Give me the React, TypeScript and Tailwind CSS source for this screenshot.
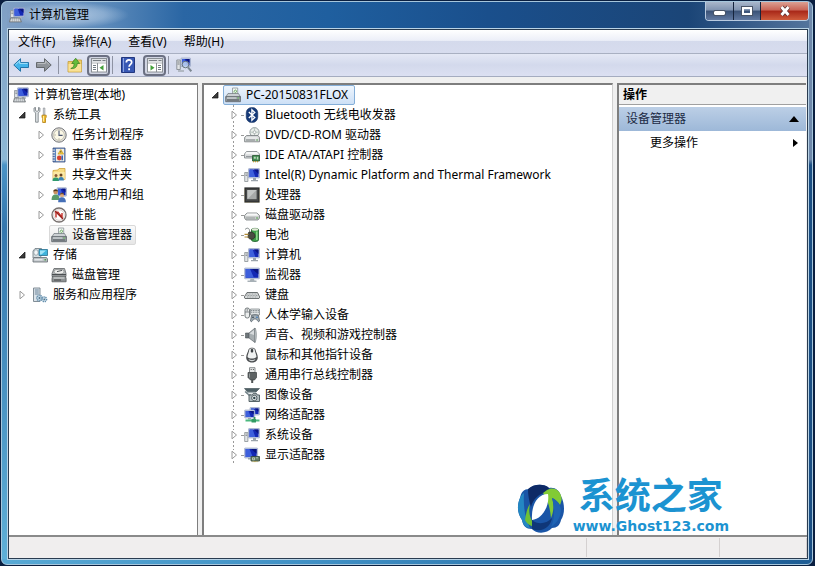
import React from 'react';

type IconProps = { children: React.ReactNode };

function Icon({ children }: IconProps) {
  return (
    <svg className="w-4 h-4 shrink-0" viewBox="0 0 16 16" fill="none" aria-hidden="true">
      {children}
    </svg>
  );
}

/* Blue screen with its grey bezel, reused by most of the hardware icons */
function Screen({ x, y, w, h }: { x: number; y: number; w: number; h: number }) {
  return (
    <>
      <rect x={x} y={y} width={w} height={h} rx="0.6" fill="#c3cfe6" stroke="#8d9bbd" strokeWidth="0.6" />
      <rect x={x + 1} y={y + 1} width={w - 2} height={h - 2} fill="#1428b4" />
      <path d={`M${x + 1} ${y + 1}h${(w - 2) * 0.35}l${(w - 2) * 0.3} ${h - 2}H${x + 1}z`} fill="#3d5fdc" />
      <path d={`M${x + w - 1} ${y + 1}v${(h - 2) * 0.6}L${x + w / 2} ${y + 1}z`} fill="#0a1580" />
    </>
  );
}

const ComputerIcon = () => (
  <Icon>
    <path d="M1.5 3.5h4v7h-4z" fill="#dde1e4" stroke="#8b9298" strokeWidth="0.8" />
    <path d="M2.3 5h2.4M2.3 6.6h2.4" stroke="#6e767c" strokeWidth="0.7" />
    <Screen x={4.5} y={0.7} w={11} h={9} />
    <path d="M9 9.7h3.4l.8 2H8.3z" fill="#aab2bb" />
    <path d="M1.5 11h9.5l1.5 4H.3z" fill="#a5aaae" stroke="#6d7276" strokeWidth="0.7" />
    <path d="M2 12.2h8.6M1.6 13.7h9.8" stroke="#eef0f1" strokeWidth="0.8" strokeDasharray="1.4 0.6" />
  </Icon>
);

const ToolsIcon = () => (
  <Icon>
    <path d="M2 1v3.3L3.6 6v9.2h2.6V6l1.7-1.7V1L6.5 .4v3.2L5 4.4l-1.5-.8V.4z" fill="#dfe3e6" stroke="#71787d" strokeWidth="0.8" />
    <path d="M11.3 1h1.6v7h-1.6z" fill="#d3d7db" stroke="#848a8e" strokeWidth="0.6" />
    <path d="M10 8.2h4.2v2l-.7 1v4.3h-2.8v-4.3l-.7-1z" fill="#f3bd2b" stroke="#b17d12" strokeWidth="0.8" />
    <path d="M11.5 9v5.5" stroke="#fdeaa0" />
  </Icon>
);

const ClockIcon = () => (
  <Icon>
    <circle cx="8" cy="8" r="7.2" fill="#e4e2dc" stroke="#75777a" />
    <circle cx="8" cy="8" r="5.3" fill="#fbf8e6" stroke="#b6b3a4" strokeWidth="0.7" />
    <path d="M8 3.6V8.4h3.6" stroke="#4a5572" strokeWidth="1.1" />
    <path d="M3.6 8h1M8 12.5v-1" stroke="#7d7a6c" strokeWidth="0.8" />
  </Icon>
);

const EventIcon = () => (
  <Icon>
    <path d="M2 1h12v14H2z" fill="#5d83bd" stroke="#3b4f7c" strokeWidth="0.8" />
    <path d="M5 1.8h8.2v12.4H5z" fill="#f1efe6" />
    <path d="M1 3h3M1 5.6h3M1 8.2h3M1 10.8h3M1 13.2h3" stroke="#d8dde6" strokeWidth="1.1" />
    <path d="M9.8 2.5l2.8 4.6H7z" fill="#f8d042" stroke="#be8d14" strokeWidth="0.6" />
    <path d="M9.8 4v1.6" stroke="#333" strokeWidth="0.8" />
    <circle cx="8.3" cy="11" r="2.4" fill="#d5402f" />
    <path d="M11.2 8.5v4.8" stroke="#3f67b4" strokeWidth="1.6" />
  </Icon>
);

const SharedFolderIcon = () => (
  <Icon>
    <path d="M2 3.5l5-.5 1-1.5h6v11H2z" fill="#f7dc82" stroke="#cfa23a" strokeWidth="0.8" />
    <path d="M2.3 5h11.4v7.3H2.3z" fill="#fbe9a6" />
    <circle cx="5" cy="8.6" r="1.5" fill="#8a5a34" />
    <path d="M1.5 14c0-3 1.3-3.6 3.5-3.6S8 11.5 8 14z" fill="#2f9a6c" />
    <circle cx="10" cy="8.1" r="1.5" fill="#68431f" />
    <path d="M7.4 13.5c0-3 .8-3.5 2.7-3.5s2.8 1 2.8 3.5z" fill="#3c83b5" />
  </Icon>
);

const UsersIcon = () => (
  <Icon>
    <Screen x={6} y={0.7} w={9.5} h={8.5} />
    <circle cx="4.6" cy="5" r="2.3" fill="#c99060" />
    <path d="M2.3 4.6c0-3 4.7-3 4.7 0-1.2-.8-3-.8-4.7 0z" fill="#563a1e" />
    <path d="M.6 13c0-4 1.4-5.5 4-5.5S8.5 9 8.5 13z" fill="#5b9a6b" />
    <circle cx="11" cy="8.3" r="2" fill="#dcab7e" />
    <path d="M9 7.8c0-2.6 4-2.6 4 0-1-.6-2.8-.6-4 0z" fill="#77502b" />
    <path d="M7.2 15.2c0-3.8 1.3-5 3.8-5s3.9 1.4 3.9 5z" fill="#466fb7" />
  </Icon>
);

const PerformanceIcon = () => (
  <Icon>
    <circle cx="8" cy="8" r="7" fill="#fff" stroke="#77706e" strokeWidth="1.3" />
    <circle cx="8" cy="8" r="5.3" stroke="#c8bbb8" strokeWidth="0.7" />
    <path d="M5 10.5V5.2h2l4 5.3V6" stroke="#c22e28" strokeWidth="1.4" />
    <path d="M4 4l8 8" stroke="#94201d" strokeWidth="1.2" />
  </Icon>
);

const DeviceManagerIcon = () => (
  <Icon>
    <path d="M7.5 1h5.2v7H7.5z" fill="#f2f5f4" stroke="#8c9498" strokeWidth="0.8" />
    <path d="M9 5.5c0-3 2.5-3 2.5-1.2S10 5 10 6.5" stroke="#57a04a" strokeWidth="0.9" />
    <path d="M3 6.5h10.5l2 3.5H.8z" fill="#cbd0d3" stroke="#6f767b" strokeWidth="0.7" />
    <path d="M.7 9.7h14.7v5H.7z" fill="#969da2" stroke="#596065" strokeWidth="0.8" />
    <path d="M2 11h9.5" stroke="#e6eaec" />
    <path d="M2 13h12" stroke="#53595d" />
    <path d="M12.5 11h1.5" stroke="#6dd05a" strokeWidth="1.2" />
  </Icon>
);

const StorageIcon = () => (
  <Icon>
    <path d="M1 4l2-2.5h6.5V9L7 11H1z" fill="#d8dfe2" stroke="#69777f" strokeWidth="0.8" />
    <ellipse cx="4" cy="5.5" rx="2.2" ry="2.8" fill="#f3f6f7" stroke="#84929a" strokeWidth="0.7" />
    <path d="M7 2.5h8.5v6H7z" fill="#3fb4dc" stroke="#28708f" strokeWidth="0.8" />
    <path d="M8 3.5h6l-4.5 4H8z" fill="#a3e3f6" />
    <path d="M2 10.5h12.5l1 1.5v3H1v-3z" fill="#bcc2c6" stroke="#686f74" strokeWidth="0.8" />
    <path d="M2.5 12.8h8" stroke="#f4f6f7" />
    <path d="M12.5 12.8h1.6" stroke="#3b9a35" strokeWidth="1.2" />
  </Icon>
);

const DiskManageIcon = () => (
  <Icon>
    <path d="M3 1.5h10.5l1.5 5v3H1v-3z" fill="#b5b8b9" stroke="#5e6264" strokeWidth="0.8" />
    <ellipse cx="8" cy="4.7" rx="5" ry="2.4" fill="#ececea" stroke="#7d8183" strokeWidth="0.7" />
    <path d="M6 4.6l5-1.2" stroke="#53575a" />
    <path d="M1 7.5h14" stroke="#4a4e50" />
    <path d="M1.7 9h12.6l.8 2.5v3.3H1v-3.3z" fill="#8d9192" stroke="#55595b" strokeWidth="0.8" />
    <path d="M2.5 11h11" stroke="#e5e7e7" />
    <path d="M3 13h7" stroke="#444" />
  </Icon>
);

const ServicesIcon = () => (
  <Icon>
    <path d="M1.5 1H8v13.5H1.5z" fill="#dce4ea" stroke="#75828c" strokeWidth="0.9" />
    <path d="M2.8 3h4M2.8 5h4M2.8 7h4" stroke="#5c7891" strokeWidth="0.9" />
    <circle cx="7.5" cy="11" r="2.7" fill="#c2d9e8" stroke="#6c93ae" strokeWidth="1.6" strokeDasharray="1.2 0.7" />
    <circle cx="12.3" cy="12.3" r="2.3" fill="#cfe2ee" stroke="#5d89a8" strokeWidth="1.5" strokeDasharray="1.1 0.7" />
    <circle cx="7.5" cy="11" r="1" fill="#56748a" />
    <circle cx="12.3" cy="12.3" r="0.9" fill="#56748a" />
  </Icon>
);

const BluetoothIcon = () => (
  <Icon>
    <rect x="2.2" y="0.4" width="11.6" height="15.2" rx="5.5" fill="#163a78" stroke="#0d2858" strokeWidth="0.5" />
    <path d="M4.8 5l6 5.6-2.9 2.7V2.7l2.9 2.7-6 5.6" stroke="#fff" strokeWidth="1.3" />
  </Icon>
);

const DvdIcon = () => (
  <Icon>
    <circle cx="10.5" cy="5.2" r="4.6" fill="#e9eeea" stroke="#8a9496" strokeWidth="0.9" />
    <path d="M10.5 1v8M6.5 5.2h8" stroke="#b5c4bc" strokeWidth="0.9" />
    <circle cx="10.5" cy="5.2" r="1.4" fill="#fff" stroke="#949d9c" strokeWidth="0.7" />
    <path d="M2.5 8.5H14l1.5 2v4.3H.6v-4.3z" fill="#d4d7d8" stroke="#73787b" strokeWidth="0.8" />
    <path d="M2 11h11.5" stroke="#fafafa" />
    <path d="M2 13h9" stroke="#747a7d" strokeWidth="0.9" />
    <path d="M12.3 13h1.6" stroke="#4c9b43" strokeWidth="1.2" />
  </Icon>
);

const IdeIcon = () => (
  <Icon>
    <path d="M2.5 4.5H13L15.5 7v4H.5V7z" fill="#d7dadb" stroke="#7f8588" strokeWidth="0.8" />
    <path d="M2.5 5h10.3l2 2.2H1.3z" fill="#f5f6f6" />
    <path d="M2 9.5h6" stroke="#8d9396" strokeWidth="0.9" />
    <path d="M8.5 8.5h7V14h-7z" fill="#3f8c4e" stroke="#24522e" strokeWidth="0.8" />
    <path d="M9.8 9.8h2v2h-2zM12.8 9.8h1.5v2.7h-1.5z" fill="#b7d4b8" />
    <path d="M9.5 14v1.3M11.5 14v1.3M13.5 14v1.3" stroke="#c19b35" />
  </Icon>
);

const PcMonitorIcon = () => (
  <Icon>
    <path d="M.7 5.5h3.2v9H.7z" fill="#e2e5e7" stroke="#8a9094" strokeWidth="0.8" />
    <path d="M1.5 7h1.7M1.5 8.5h1.7" stroke="#737a80" strokeWidth="0.7" />
    <Screen x={4.5} y={1.5} w={11} h={9.5} />
    <path d="M9 11h3v2H9zM7 13h7v1.2H7z" fill="#9ba4ac" />
  </Icon>
);

const CpuIcon = () => (
  <Icon>
    <rect x="1" y="1" width="14" height="14" fill="#454747" stroke="#2a2c2c" strokeWidth="1.2" />
    <path d="M1 15.5h14M.5 2v13M15.5 2v13" stroke="#8d8464" strokeWidth="0.8" strokeDasharray="0.8 0.8" />
    <rect x="3.4" y="3" width="9.2" height="9.2" fill="#a6a9a8" />
    <path d="M3.4 3h9.2l-9.2 9.2z" fill="#c3c6c5" />
  </Icon>
);

const DriveIcon = () => (
  <Icon>
    <path d="M3 6h10l2.5 2.5V11L14 13H2L.5 11V8.5z" fill="#c9cccc" stroke="#777c7e" strokeWidth="0.8" />
    <path d="M3.2 6.4h9.6l2 2.3H1.2z" fill="#f7f8f8" />
    <path d="M2 11h9" stroke="#939898" strokeWidth="0.9" />
    <path d="M12.2 11h1.7" stroke="#47a03c" strokeWidth="1.2" />
  </Icon>
);

const BatteryIcon = () => (
  <Icon>
    <path d="M7.5 2.5c0-1.5 7-1.5 7 0V13c0 2-7 2-7 0z" fill="#3fa04a" stroke="#1f5c2a" strokeWidth="0.8" />
    <ellipse cx="11" cy="2.5" rx="3.2" ry="1.2" fill="#e3ead8" />
    <path d="M12.8 4.5V13" stroke="#93db91" strokeWidth="1.4" />
    <path d="M1 2.5c3-3 5-.5 4.500 2.500" stroke="#7d8585" strokeWidth="0.9" />
    <path d="M4.5 5.5c4-1.5 7 1 6.500 4.500-1.500 3-5 3-7 .5z" fill="#4a4b43" stroke="#252720" strokeWidth="0.7" />
    <path d="M.5 7.3h4M.5 10h4" stroke="#b18b36" strokeWidth="1.2" />
  </Icon>
);

const MonitorIcon = () => (
  <Icon>
    <Screen x={0.6} y={1} w={14.8} h={10.8} />
    <path d="M6.5 11.8h3.4l.6 1.7H6zM3.5 13.5h9V15h-9z" fill="#a7b0b6" />
  </Icon>
);

const KeyboardIcon = () => (
  <Icon>
    <path d="M3 5.5h10.5l2.2 4.5-.7 1.5H1L.3 10z" fill="#dadddd" stroke="#5d6263" strokeWidth="0.9" />
    <path d="M3.2 7h10M2.4 8.5h11.8M3 10h10.5" stroke="#7d8385" strokeWidth="0.7" strokeDasharray="1 0.6" />
  </Icon>
);

const HidIcon = () => (
  <Icon>
    <rect x="1" y="1" width="4.5" height="10" rx="2" fill="#eceeee" stroke="#6a7073" strokeWidth="0.9" />
    <path d="M3.2 1.5v3M1 5h4.5" stroke="#6a7073" strokeWidth="0.8" />
    <path d="M6.5 2h9v6h-9z" fill="#dfe3e4" stroke="#838a8d" strokeWidth="0.8" />
    <path d="M7.2 3.5h7.6M7.2 5.2h7.6" stroke="#697276" strokeWidth="0.9" strokeDasharray="1 0.7" />
    <path d="M7.5 8.5c2-1 5-1 7 0l1 5.5c-1 1.5-2 0-3-2h-3c-1 2-2 3.5-3 2z" fill="#a4b0b8" stroke="#515b62" strokeWidth="0.8" />
    <circle cx="9" cy="10.2" r="0.8" fill="#25303a" />
    <circle cx="13" cy="10.2" r="0.8" fill="#2f6fb8" />
  </Icon>
);

const SpeakerIcon = () => (
  <Icon>
    <path d="M1.500 6H5v5H1.500z" fill="#6f777b" stroke="#4e5558" strokeWidth="0.6" />
    <path d="M5 6l6-5v14.5L5 11z" fill="#a7aeb1" stroke="#5e666a" strokeWidth="0.7" />
    <path d="M5.5 6.6L10 3v5z" fill="#d7dbdd" />
    <path d="M11 1c2 3 2 11 0 14.500z" fill="#c7ccce" stroke="#7b8386" strokeWidth="0.5" />
  </Icon>
);

const MouseIcon = () => (
  <Icon>
    <path d="M4.500 2.500C5.500.3 10.500.3 11.500 2.500c.5 3 2.500 5 2.300 8.500-.5 6-11 6-11.600 0C2 7.500 4 5.500 4.500 2.500z" fill="#4b4e50" />
    <path d="M5.300 2.500c.5-1.500 4.900-1.500 5.400 0 .2 3 1.800 5 1.800 7.500-2 2-7 2-9 0 0-2.500 1.600-4.500 1.800-7.500z" fill="#eff1f1" />
    <path d="M4.500 12c2 1.200 5 1.200 7 0-.8 2.900-6.200 2.900-7 0z" fill="#d3d7d8" />
    <rect x="6.8" y="2" width="2.4" height="3.5" rx="0.8" fill="#3b4043" />
  </Icon>
);

const UsbIcon = () => (
  <Icon>
    <path d="M5.500.7H11v5H5.500z" fill="#e6e8e8" stroke="#7c8183" strokeWidth="0.9" />
    <path d="M6.700 2.500h1M8.900 2.500h1" stroke="#555" />
    <path d="M4 5.500h8.500v5L10.500 13h-4L4 10.500z" fill="#5e6364" stroke="#3b3f40" strokeWidth="0.7" />
    <path d="M5.500 6.500v4" stroke="#949a9b" />
    <path d="M8.200 13v3" stroke="#505455" strokeWidth="2" />
  </Icon>
);

const ImagingIcon = () => (
  <Icon>
    <path d="M.5 1.500h15L12 5H3.500z" fill="#4e6066" stroke="#39484d" strokeWidth="0.6" />
    <path d="M2 5.500h9l2 2" stroke="#a4b0b3" strokeWidth="1.4" />
    <path d="M1 4.500L5 8h2" stroke="#738288" strokeWidth="1.3" />
    <path d="M5 8h3l1-1.300h3.500l.8 1.300h2.200v6.500H5z" fill="#b2bdc0" stroke="#4a575b" strokeWidth="0.9" />
    <circle cx="10.3" cy="11" r="2.7" fill="#edf1f1" stroke="#4a575b" strokeWidth="0.9" />
    <circle cx="10.3" cy="11" r="1.2" fill="#2b4248" />
  </Icon>
);

const NetworkIcon = () => (
  <Icon>
    <Screen x={6} y={0.5} w={9.5} h={7.5} />
    <Screen x={0.7} y={3} w={10} h={8} />
    <path d="M4 11h3v1.500H4z" fill="#9ba7b0" />
    <path d="M10.500 10v3" stroke="#39935e" strokeWidth="1.8" />
    <path d="M1.500 13.500h14" stroke="#4bb87e" strokeWidth="2" />
    <rect x="7.5" y="12" width="4.5" height="3.5" rx="0.5" fill="#319a63" />
  </Icon>
);

const DisplayAdapterIcon = () => (
  <Icon>
    <Screen x={0.6} y={1} w={13} h={10} />
    <path d="M4 11h4v1.500H4z" fill="#9ca6ad" />
    <path d="M7 9.500h8.500V14H7z" fill="#68806b" stroke="#35493a" strokeWidth="0.8" />
    <path d="M8.500 10.800h2v2h-2zM12 10.800h2" stroke="#d6dfc8" strokeWidth="0.7" />
    <path d="M8.500 14.600h5" stroke="#ae9a45" strokeDasharray="0.9 0.5" />
  </Icon>
);

const BackIcon = () => (
  <Icon>
    <path d="M.8 8l6.700-6.300v3.800h8v5h-8v3.800z" fill="#43b4ea" stroke="#2374a8" strokeLinejoin="round" />
    <path d="M2.500 7.700l4.200-3.800v2.500h7.900" stroke="#a6e2fa" />
  </Icon>
);

const ForwardIcon = () => (
  <Icon>
    <path d="M15.200 8L8.500 1.700v3.800h-8v5h8v3.800z" fill="#8f9499" stroke="#63686c" strokeLinejoin="round" />
    <path d="M1.500 6.400h7.900V3.900l4 3.800" stroke="#bdc1c4" />
  </Icon>
);

const FolderUpIcon = () => (
  <Icon>
    <path d="M1 4.500h5L7 3h7.500v12H1z" fill="#f1cf67" stroke="#c39d3c" strokeWidth="0.8" />
    <path d="M1.500 7h12.700v7.500H1.500z" fill="#f9e196" />
    <path d="M3.800 11.500c2.500-1 3.300-2.500 3.300-5H4.700l4-5.300 4 5.300h-2.500c0 3.500-2.400 5.500-6.400 5z" fill="#65bd3b" stroke="#357c20" strokeWidth="0.7" />
  </Icon>
);

const HelpIcon = () => (
  <Icon>
    <path d="M1.500.5h13v15h-13z" fill="#3858b4" stroke="#22377f" />
    <path d="M3.500 1v14" stroke="#8ba3e0" />
    <path d="M6.300 5.500c0-3.500 5.400-3.300 5.400-.3 0 2.200-2.600 2-2.600 4.600" stroke="#fff" strokeWidth="1.7" />
    <rect x="8.2" y="11.3" width="1.8" height="1.9" fill="#fff" />
  </Icon>
);

const PaneIcon = ({ flip = false }: { flip?: boolean }) => (
  <Icon>
    <rect x="0.5" y="1.5" width="15" height="13.5" fill="#fff" stroke="#8b9095" />
    <path d="M1 3.5h14" stroke="#d5d9dc" strokeWidth="2.5" />
    <path d="M2 3.5h8M11.5 3.5h3" stroke="#777d83" />
    <path d="M1 6h14" stroke="#8b9095" strokeWidth="0.7" />
    <path d={flip ? 'M9.5 6v9' : 'M6.5 6v9'} stroke="#8b9095" />
    <path d={flip ? 'M11 8.5h3M11 10.5h3M11 12.5h3' : 'M2 8.5h3M2 10.5h3M2 12.5h3'} stroke="#717b84" />
    <path d={flip ? 'M3.5 8l4 2.8-4 2.7z' : 'M12.5 8l-4 2.8 4 2.7z'} fill="#43a03b" />
  </Icon>
);

const ScanIcon = () => (
  <Icon>
    <path d="M.8 3h3.500v9.500H.8z" fill="#e0e3e4" stroke="#7b8286" strokeWidth="0.8" />
    <path d="M1.500 5h2M1.500 7h2" stroke="#60676b" strokeWidth="0.8" />
    <Screen x={5} y={1} w={9.5} h={8.5} />
    <circle cx="9.5" cy="7.5" r="3.3" fill="#c5daf2" fillOpacity="0.8" stroke="#68737d" />
    <path d="M12 10.300l3.300 4" stroke="#7c8791" strokeWidth="2" />
    <path d="M2 14h6" stroke="#989fa3" strokeWidth="1.2" />
  </Icon>
);

type Expand = 'open' | 'closed' | 'none';

function Expander({ state }: { state: Expand }) {
  return (
    <span className="flex h-3 w-3 shrink-0 items-center justify-center">
      {state === 'closed' && (
        <svg className="h-[10px] w-[8px] bg-white" viewBox="0 0 8 10" fill="none" aria-hidden="true">
          <path d="M2 1.2v7.6L6.5 5z" fill="#fff" stroke="#9a9a9a" />
        </svg>
      )}
      {state === 'open' && (
        <svg className="h-[8px] w-[8px]" viewBox="0 0 8 8" aria-hidden="true">
          <path d="M7 1v6H1z" fill="#3a3a3a" stroke="#111" strokeWidth="0.7" />
        </svg>
      )}
    </span>
  );
}

type TreeItem = {
  label: string;
  icon: React.ComponentType;
  level: 1 | 2;
  expand: Expand;
  selected?: boolean;
};

const consoleTree: TreeItem[] = [
  { label: '系统工具', icon: ToolsIcon, level: 1, expand: 'open' },
  { label: '任务计划程序', icon: ClockIcon, level: 2, expand: 'closed' },
  { label: '事件查看器', icon: EventIcon, level: 2, expand: 'closed' },
  { label: '共享文件夹', icon: SharedFolderIcon, level: 2, expand: 'closed' },
  { label: '本地用户和组', icon: UsersIcon, level: 2, expand: 'closed' },
  { label: '性能', icon: PerformanceIcon, level: 2, expand: 'closed' },
  { label: '设备管理器', icon: DeviceManagerIcon, level: 2, expand: 'none', selected: true },
  { label: '存储', icon: StorageIcon, level: 1, expand: 'open' },
  { label: '磁盘管理', icon: DiskManageIcon, level: 2, expand: 'none' },
  { label: '服务和应用程序', icon: ServicesIcon, level: 1, expand: 'closed' },
];

const devices: { label: string; icon: React.ComponentType }[] = [
  { label: 'Bluetooth 无线电收发器', icon: BluetoothIcon },
  { label: 'DVD/CD-ROM 驱动器', icon: DvdIcon },
  { label: 'IDE ATA/ATAPI 控制器', icon: IdeIcon },
  { label: 'Intel(R) Dynamic Platform and Thermal Framework', icon: PcMonitorIcon },
  { label: '处理器', icon: CpuIcon },
  { label: '磁盘驱动器', icon: DriveIcon },
  { label: '电池', icon: BatteryIcon },
  { label: '计算机', icon: PcMonitorIcon },
  { label: '监视器', icon: MonitorIcon },
  { label: '键盘', icon: KeyboardIcon },
  { label: '人体学输入设备', icon: HidIcon },
  { label: '声音、视频和游戏控制器', icon: SpeakerIcon },
  { label: '鼠标和其他指针设备', icon: MouseIcon },
  { label: '通用串行总线控制器', icon: UsbIcon },
  { label: '图像设备', icon: ImagingIcon },
  { label: '网络适配器', icon: NetworkIcon },
  { label: '系统设备', icon: PcMonitorIcon },
  { label: '显示适配器', icon: DisplayAdapterIcon },
];

const menus = ['文件(F)', '操作(A)', '查看(V)', '帮助(H)'];

const indent = { 1: 'pl-[7px]', 2: 'pl-[26px]' };

function Separator() {
  return <span className="mx-1 h-[18px] w-px bg-[#8e93a3]" />;
}

function TitleBar() {
  return (
    <header className="flex h-[26px] items-start justify-between bg-[linear-gradient(90deg,#7f9fc4,#5d8bbb_12%,#2a66a4_22%,#1f5f9f_40%,#1a4f8c_60%,#1b4577_85%,#54749c)]">
      <div className="flex h-full items-center gap-1 bg-[radial-gradient(closest-side,rgba(205,222,240,0.7),rgba(205,222,240,0.4)_60%,transparent)] pl-[2px] pr-10">
        <ComputerIcon />
        <h1 className="text-xs text-black">计算机管理</h1>
      </div>
      <div className="flex h-[19px] overflow-hidden rounded-b-[4px] border border-t-0 border-[#b9cbe0]">
        <button aria-label="最小化" className="flex w-[28px] items-center justify-center border-r border-[#16243c] bg-[linear-gradient(#a9b7cb,#8093b0_45%,#3a5277_50%,#6179a0)]">
          <span className="mt-1 h-[4px] w-[11px] rounded-[1px] bg-white outline outline-1 outline-[#4a5568]" />
        </button>
        <button aria-label="最大化" className="flex w-[27px] items-center justify-center border-r border-[#16243c] bg-[linear-gradient(#a9b7cb,#8093b0_45%,#3a5277_50%,#6179a0)]">
          <span className="h-[8px] w-[10px] border-2 border-white outline outline-1 outline-[#4a5568]" />
        </button>
        <button aria-label="关闭" className="flex w-[47px] items-center justify-center bg-[linear-gradient(#dca093,#c96455_45%,#a82718_50%,#cf5c3c)]">
          <svg className="h-[12px] w-[14px]" viewBox="0 0 14 12" aria-hidden="true">
            <path d="M3.5 2l7 8M10.5 2l-7 8" stroke="#5c3536" strokeWidth="4.4" />
            <path d="M3.5 2l7 8M10.5 2l-7 8" stroke="#fff" strokeWidth="2.8" />
          </svg>
        </button>
      </div>
    </header>
  );
}

function ToolBar() {
  return (
    <div className="flex h-[23px] items-center border-b border-[#a5acc0] bg-[linear-gradient(#e4e8f5,#d3d9ec_50%,#dce0f2)] pl-1">
      <button aria-label="后退"><BackIcon /></button>
      <button aria-label="前进" className="ml-[7px] mr-[2px]"><ForwardIcon /></button>
      <Separator />
      <button aria-label="上移一级" className="mx-1"><FolderUpIcon /></button>
      <button aria-label="显示/隐藏控制台树" className="flex h-[21px] w-[23px] items-center justify-center rounded-[4px] border-2 border-[#6b7082] bg-[#d0d4e2]">
        <PaneIcon />
      </button>
      <span className="ml-[2px] h-[18px] w-px bg-[#8e93a3]" />
      <button aria-label="帮助" className="mx-[7px]"><HelpIcon /></button>
      <button aria-label="显示/隐藏操作窗格" className="flex h-[21px] w-[23px] items-center justify-center rounded-[4px] border-2 border-[#6b7082] bg-[#d0d4e2]">
        <PaneIcon flip />
      </button>
      <span className="ml-[2px] h-[18px] w-px bg-[#8e93a3]" />
      <button aria-label="扫描检测硬件改动" className="ml-[7px]"><ScanIcon /></button>
    </div>
  );
}

function ConsoleTree() {
  return (
    <nav className="w-[189px] shrink-0 border-r border-t-2 border-[#7e7e7e] bg-white">
      <ul>
        <li className="flex h-5 items-center gap-[5px] pl-1">
          <ComputerIcon />
          计算机管理(本地)
        </li>
        {consoleTree.map((item) => (
          <li key={item.label} className={`flex h-5 items-center gap-[2px] ${indent[item.level]}`}>
            <Expander state={item.expand} />
            <span
              className={`flex h-5 items-center gap-[5px] rounded-[2px] border pl-px pr-[3px] ${
                item.selected ? 'border-[#d9d9d9] bg-[linear-gradient(#fafafa,#e6e6e6)]' : 'border-transparent'
              }`}
            >
              <item.icon />
              {item.label}
            </span>
          </li>
        ))}
      </ul>
    </nav>
  );
}

function DeviceTree() {
  return (
    <main className="min-w-0 flex-1 border-l-2 border-r border-t-2 border-l-[#7e7e7e] border-r-[#d0d0d0] border-t-[#7e7e7e] bg-white">
      <div className="flex h-5 items-center gap-[2px] pl-[5px]">
        <Expander state="open" />
        <span className="flex h-5 items-center gap-[5px] rounded-[2px] border border-[#84aed8] bg-[linear-gradient(#eef5fd,#cde0f6)] pl-px pr-[6px]">
          <DeviceManagerIcon />
          PC-20150831FLOX
        </span>
      </div>
      <ul className="ml-6 bg-[linear-gradient(#999_50%,transparent_50%)] bg-[length:1px_4px] bg-[position:5px_0] bg-repeat-y">
        {devices.map((device) => (
          <li key={device.label} className="flex h-5 items-center gap-px whitespace-nowrap">
            <Expander state="closed" />
            <span className="w-[2px] border-t border-dotted border-[#999]" />
            <span className="flex items-center gap-[5px]">
              <device.icon />
              {device.label}
            </span>
          </li>
        ))}
      </ul>
    </main>
  );
}

function ActionsPane() {
  return (
    <aside className="w-[189px] shrink-0 border-l-2 border-t-2 border-[#7e7e7e] bg-white">
      <h2 className="flex h-5 items-center border-b border-[#a0a0a0] bg-[#f0f0f0] pl-1 font-bold">操作</h2>
      <button className="mt-[2px] flex h-6 w-full items-center justify-between bg-[linear-gradient(#bccfe6,#9db8d8)] px-[7px] text-[#1c2a44]">
        设备管理器
        <svg className="h-[6px] w-[10px]" viewBox="0 0 10 6" aria-hidden="true">
          <path d="M5 0l5 6H0z" fill="#000" />
        </svg>
      </button>
      <button className="flex h-6 w-full items-center justify-between pl-[31px] pr-2">
        更多操作
        <svg className="h-[8px] w-[5px]" viewBox="0 0 5 8" aria-hidden="true">
          <path d="M0 0l5 4-5 4z" fill="#000" />
        </svg>
      </button>
    </aside>
  );
}

function Watermark() {
  return (
    <div className="absolute bottom-[30px] right-[83px] flex items-end gap-2 text-[#1c93d1]">
      <svg className="h-[50px] w-[48px]" viewBox="0 0 48 50" fill="none" aria-hidden="true">
        <path d="M12 5C16 0 27-1 32 4c6-1 10 2 12 8 4 8 4 18 0 24-1 5-4 8-9 8-5 6-16 6-20 1-6 0-9-3-10-9C0 29 0 21 3 14c1-6 4-9 9-9z" fill="#1a55a6" />
        <path d="M3 14C0 21 0 29 5 36c1 5 4 8 8 8C9 36 6 26 7 9c-2 1-3 3-4 5z" fill="#2487c2" />
        <path d="M11 5C16 0 27-1 32 4l-1 4C22 9 16 15 14 23 12 17 11 11 11 5z" fill="#0e2a66" />
        <path d="M30 6c6-4 13 0 14 6 1 3 1 4-1 9-2-3-5-6-8-7 2 6 2 13-1 20-1-10-3-18-8-25z" fill="#82cb35" />
        <path d="M35 14c5 2 9 7 9 13-1 7-4 12-10 16 4-9 4-19 1-29z" fill="#1e64b4" />
        <path d="M13 20c-2 8 0 17 7 23-6 0-10-3-12-7 1-6 2-12 5-16z" fill="#6fc036" />
        <path d="M15 36c6 5 14 4 20-2-1 8-9 15-20 11z" fill="#0f3778" />
        <path d="M31 10C21 10 14 20 15 36c10-1 18-14 16-26z" fill="#fff" />
      </svg>
      <div className="flex flex-col items-center">
        <span className="font-['Liberation_Sans','Noto_Sans_CJK_SC',sans-serif] text-4xl font-bold leading-[42px]">系统之家</span>
        <a href="#ghost" className="font-['DejaVu_Sans',sans-serif] text-sm font-bold leading-4">www.Ghost123.com</a>
      </div>
    </div>
  );
}

export default function App() {
  return (
    <div className="flex min-h-screen flex-col bg-[#0a1f40] pb-px pl-px pr-[2px] pt-px font-['Noto_Sans','Noto_Sans_CJK_SC',sans-serif] text-xs text-black">
      <div className="relative flex flex-1 flex-col rounded-[6px] border border-[#a6c6dc] bg-[linear-gradient(90deg,#58a9d4,#3f8fc4_40%,#1d5c94),linear-gradient(#7f9fc4,#8db8d6_28%,#4a93c6_29%,#3577ae_40%,#5fb0d8),linear-gradient(#6f89ab_28%,#1b4f84_29%)] bg-[length:100%_5px,10px_100%,100%_100%] bg-[position:bottom,left,right] bg-no-repeat pb-1 pl-[5px] pr-[3px]">
        <TitleBar />
        <div className="flex flex-1 flex-col border border-[#b9d3e6]">
          <div className="flex flex-1 flex-col border border-[#2a3c50] bg-[#f0f0f0]">
            <div className="flex h-6 items-center gap-[17px] border-b border-[#a9b0c2] bg-[linear-gradient(#fff,#eceff8_45%,#d4daec_50%,#d7dcee)] pl-[9px]">
              {menus.map((menu) => (
                <button key={menu}>{menu}</button>
              ))}
            </div>
            <ToolBar />
            <div className="flex flex-1 gap-1 border-b-2 border-[#8a8a8a] pr-px pt-[6px]">
              <ConsoleTree />
              <DeviceTree />
              <ActionsPane />
            </div>
            <footer className="flex h-[21px] bg-[#f0eeee] py-px">
              <span className="flex-1" />
              <span className="w-[133px] border-l border-[#d4d0d0]" />
              <span className="w-[88px] border-l border-r border-[#d4d0d0]" />
            </footer>
          </div>
        </div>
        <Watermark />
      </div>
    </div>
  );
}
